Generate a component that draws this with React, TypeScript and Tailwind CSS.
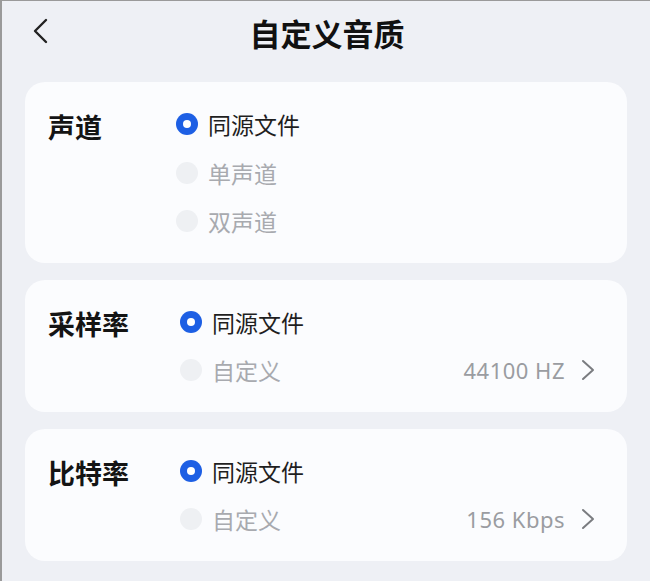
import React from "react";

const FONT = { fontFamily: '"Noto Sans CJK SC", "Noto Sans", sans-serif' };

function Radio({ checked }: { checked: boolean }) {
  return checked ? (
    <span className="w-[22px] h-[22px] rounded-full bg-[#1d5fe4] flex items-center justify-center shrink-0">
      <span className="w-[8px] h-[8px] rounded-full bg-white" />
    </span>
  ) : (
    <span className="w-[22px] h-[22px] rounded-full bg-[#eef0f3] shrink-0" />
  );
}

function Chevron() {
  return (
    <svg width="14" height="22" viewBox="0 0 14 22" className="shrink-0">
      <polyline points="2,2 12,11 2,20" fill="none" stroke="#7a7c80" strokeWidth="2" strokeLinecap="round" strokeLinejoin="round" />
    </svg>
  );
}

type Opt = { text: string; checked: boolean; value?: string };

function Card({ label, labelW, options }: { label: string; labelW: string; options: Opt[] }) {
  return (
    <div className="bg-[#fbfcfe] rounded-[20px] flex pt-[18px] pb-[17px] pl-[23px] pr-[32px]">
      <div className={`${labelW} shrink-0 h-[48px] flex items-center pt-[6px] text-[27px] font-bold text-[#141414]`}>{label}</div>
      <div className="flex-1 flex flex-col">
        {options.map((o) => (
          <div key={o.text} className="h-[48.5px] flex items-center">
            <Radio checked={o.checked} />
            <span className={`ml-[10px] text-[23px] ${o.checked ? "text-[#1f1f1f]" : "text-[#a8aaaf]"}`}>{o.text}</span>
            {o.value && (
              <div className="ml-auto flex items-center gap-[16px]">
                <span className="text-[22px] tracking-[0.5px] text-[#9a9ca1]" style={{ fontFamily: '"Noto Sans", "Noto Sans CJK SC", sans-serif' }}>{o.value}</span>
                <Chevron />
              </div>
            )}
          </div>
        ))}
      </div>
    </div>
  );
}

export default function App() {
  return (
    <div className="w-[650px] h-[581px] bg-[#eef0f5] border-l-2 border-t border-[#9a9a9a] overflow-hidden" style={FONT}>
      <div className="h-[65px] relative flex items-center justify-center">
        <svg width="16" height="26" viewBox="0 0 16 26" className="absolute left-[31px] top-[17px]">
          <polyline points="13,2 2,13 13,24" fill="none" stroke="#222" strokeWidth="2.4" strokeLinecap="round" strokeLinejoin="round" />
        </svg>
        <h1 className="text-[31px] font-bold text-[#111] ml-[2px]">自定义音质</h1>
      </div>
      <div className="pl-[23px] pr-[23px] pt-[16px] flex flex-col gap-[17px]">
        <Card
          label="声道"
          labelW="w-[128px]"
          options={[
            { text: "同源文件", checked: true },
            { text: "单声道", checked: false },
            { text: "双声道", checked: false },
          ]}
        />
        <Card
          label="采样率"
          labelW="w-[132px]"
          options={[
            { text: "同源文件", checked: true },
            { text: "自定义", checked: false, value: "44100 HZ" },
          ]}
        />
        <Card
          label="比特率"
          labelW="w-[132px]"
          options={[
            { text: "同源文件", checked: true },
            { text: "自定义", checked: false, value: "156 Kbps" },
          ]}
        />
      </div>
    </div>
  );
}
